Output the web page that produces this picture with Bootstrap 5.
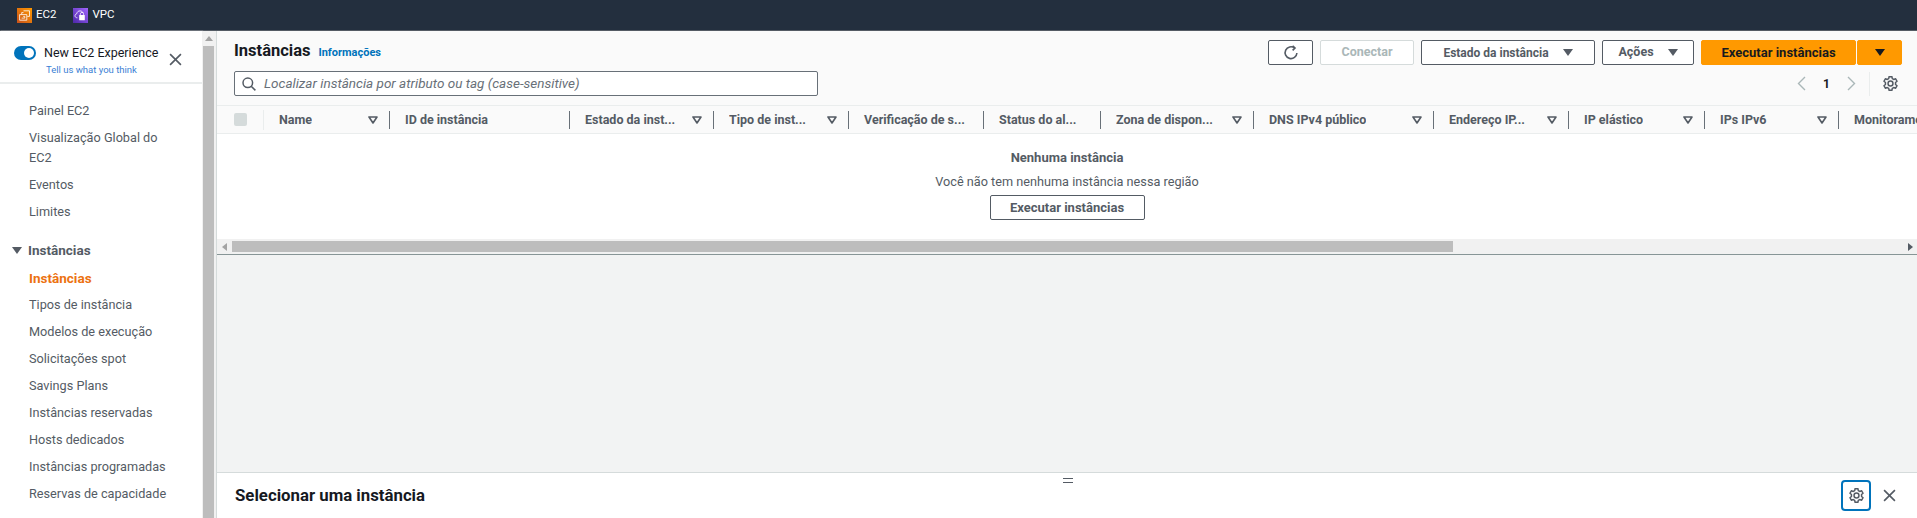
<!DOCTYPE html>
<html lang="pt-BR">
<head>
<meta charset="UTF-8">
<meta name="viewport" content="width=device-width, initial-scale=1.0">
<title>Instâncias | EC2</title>
<link href="https://cdn.jsdelivr.net/npm/bootstrap@5.3.0/dist/css/bootstrap.min.css" rel="stylesheet">
<style>
    html, body {
        height: 100%;
        overflow: hidden;
    }

    body {
        font-family: Roboto, "Liberation Sans", sans-serif;
        font-size: 13px;
        color: #16191f;
        background: #fff;
    }

    .app-top {
        height: 31px;
        padding-left: 17px;
        background: #232f3e;
        border-bottom: 1px solid #545b64;
        color: #fff;
        font-size: 11.5px;
    }

    .svc {
        gap: 4px;
        margin-right: 17px;
    }

    .app-body {
        height: 487px;
    }

    /* left nav */
    .side {
        width: 202px;
        flex: none;
        box-shadow: 1px 0 1px #e5e5e5;
    }

    .side-head {
        height: 53px;
        padding: 14px 20px 0 14px;
        border-bottom: 2px solid #eaeded;
    }

    .toggle-pill {
        width: 22px;
        height: 14px;
        margin-top: 1px;
        border-radius: 7px;
        background: #0073bb;
        position: relative;
        flex: none;
    }

    .toggle-pill::after {
        content: "";
        position: absolute;
        right: 2px;
        top: 2px;
        width: 10px;
        height: 10px;
        border-radius: 50%;
        background: #fff;
    }

    .exp-title {
        font-size: 12.5px;
        line-height: 16px;
        color: #16191f;
        white-space: nowrap;
    }

    .exp-link {
        display: block;
        margin: 2px 0 0 2px;
        font-size: 9.5px;
        line-height: 14px;
        color: #3b7fd5;
        text-decoration: none;
        white-space: nowrap;
    }

    .side-close {
        margin-top: 8px;
    }

    .side-list {
        padding: 17px 24px 0 29px;
        margin: 0;
        list-style: none;
    }

    .side-list li {
        line-height: 20px;
        margin-bottom: 7px;
        color: #545b64;
        font-size: 12.7px;
    }

    .side-list .group-head {
        margin: 18px 0 8px -17px;
        font-size: 13.5px;
        font-weight: 700;
        gap: 6px;
    }

    .side-list .is-active {
        color: #ec7211;
        font-size: 13.5px;
        font-weight: 700;
    }

    .tri {
        width: 0;
        height: 0;
        border-left: 5px solid transparent;
        border-right: 5px solid transparent;
        border-top: 7px solid #545b64;
        display: inline-block;
        flex: none;
    }

    .tri-dark {
        border-top-color: #16191f;
    }

    .vscroll {
        width: 14px;
        flex: none;
        padding: 0 2px 0 1px;
        background: #f1f1f1;
    }

    .vscroll-up {
        height: 15px;
        color: #a3a3a3;
    }

    .vscroll-thumb {
        height: 472px;
        background: #bdbdbd;
    }

    /* main pane */
    .main-pane {
        min-width: 0;
        border-left: 1px solid #d5dbdb;
        background: #f2f3f3;
    }

    .list-head {
        height: 74px;
        padding: 9px 15px 0 17px;
        background: #fafafa;
    }

    .page-title {
        font-size: 16.5px;
        font-weight: 700;
        line-height: 22px;
        margin: 0;
    }

    .info-link {
        font-size: 11px;
        font-weight: 700;
        color: #0073bb;
        text-decoration: none;
    }

    .aws-btn {
        height: 25px;
        padding: 0;
        border: 1px solid #545b64;
        border-radius: 2px;
        background: #fff;
        color: #545b64;
        font-size: 12.5px;
        font-weight: 700;
        line-height: 1;
        white-space: nowrap;
    }

    .aws-btn:disabled {
        border-color: #d5dbdb;
        color: #aab7b8;
        opacity: 1;
    }

    .aws-primary {
        border-color: #ff9900;
        background: #ff9900;
        color: #16191f;
    }

    .btn-row {
        gap: 7px;
    }

    .btn-split {
        gap: 14px;
    }

    .w-refresh { width: 45px; }
    .w-connect { width: 94px; }
    .w-state { width: 174px; font-size: 12px; }
    .w-action { width: 92px; }
    .w-run { width: 155px; font-size: 13px; }
    .w-caret { width: 45px; margin-left: -6px; }
    .w-empty { width: 155px; font-size: 13px; }

    .find-box {
        width: 584px;
        height: 25px;
        margin-top: 9px;
        padding-left: 7px;
        gap: 8px;
        border: 1px solid #687078;
        border-radius: 2px;
        background: #fff;
        color: #687078;
        font-size: 13.5px;
        font-style: italic;
    }

    .pager {
        height: 25px;
        margin-top: 6px;
        padding-right: 4px;
        gap: 17px;
        color: #16191f;
        font-weight: 700;
        font-size: 12px;
    }

    .pager-sep {
        width: 1px;
        height: 24px;
        margin: 0 -4px;
        background: #eaeded;
    }

    /* instance table */
    .inst-wrap {
        height: 134px;
        background: #fff;
        overflow: hidden;
    }

    .inst-head {
        display: grid;
        grid-template-columns: 47px 126px 180px 144px 135px 135px 117px 153px 180px 135px 136px 134px 200px;
        height: 29px;
        align-items: center;
        background: #fafafa;
        border-top: 1px solid #eaeded;
        border-bottom: 1px solid #eaeded;
        color: #545b64;
        font-size: 12.5px;
        font-weight: 700;
        white-space: nowrap;
    }

    .head-check {
        padding-left: 17px;
        height: 20px;
        border-right: 1px solid #eaeded;
    }

    .check-box {
        display: block;
        width: 13px;
        height: 13px;
        margin-top: 3px;
        border-radius: 2px;
        background: #d5dbdb;
    }

    .head-cell {
        height: 18px;
        padding: 0 11px 0 15px;
        border-right: 1px solid #687078;
        line-height: 18px;
        min-width: 0;
    }

    .head-cell span {
        overflow: hidden;
        text-overflow: ellipsis;
    }

    .empty-box {
        padding-top: 14px;
        color: #545b64;
    }

    .empty-title {
        font-size: 13px;
        font-weight: 700;
        line-height: 20px;
    }

    .empty-msg {
        font-size: 12.7px;
        line-height: 20px;
        margin: 4px 0 3px;
    }

    .hscroll {
        height: 15px;
        padding: 2px 0;
        background: #f1f1f1;
    }

    .hscroll-arrow {
        width: 14px;
        flex: none;
        color: #a3a3a3;
    }

    .hscroll-thumb {
        width: 1221px;
        margin-left: 1px;
        background: #bdbdbd;
    }

    .split-line {
        height: 1px;
        background: #879596;
    }

    .gray-area {
        flex: 1;
    }

    .detail-pane {
        height: 46px;
        padding: 0 21px 0 18px;
        border-top: 1px solid #d5dbdb;
        background: #fff;
        position: relative;
    }

    .detail-title {
        font-size: 16.8px;
        font-weight: 700;
        margin: 0;
    }

    .drag-mark {
        position: absolute;
        left: 846px;
        top: 5px;
        width: 10px;
        height: 5px;
        border-top: 1px solid #545b64;
        border-bottom: 1px solid #545b64;
    }

    .gear-focus {
        width: 30px;
        height: 31px;
        margin-right: 12px;
        border: 2px solid #0073bb;
        border-radius: 4px;
    }
</style>
</head>
<body>
    <svg width="0" height="0" class="d-block">
        <defs>
            <symbol id="ico-gear" viewBox="1 1 14 14">
                <path fill="none" stroke="currentColor" stroke-width="1.4" stroke-linejoin="round" d="M6.7 1.6h2.6l.4 1.8 1.3.8 1.8-.6 1.3 2.3-1.4 1.2v1.8l1.4 1.2-1.3 2.3-1.8-.6-1.3.8-.4 1.8H6.7l-.4-1.8-1.3-.8-1.8.6-1.3-2.3 1.4-1.2V7.1L1.9 5.9l1.3-2.3 1.8.6 1.3-.8z"/>
                <circle cx="8" cy="8" r="2.3" fill="none" stroke="currentColor" stroke-width="1.4"/>
            </symbol>
            <symbol id="ico-x" viewBox="0 0 12 12">
                <path d="M1 1l10 10M11 1L1 11" fill="none" stroke="currentColor" stroke-width="1.5"/>
            </symbol>
            <symbol id="ico-filter" viewBox="0 0 10 8">
                <path d="M1 1h8L5 7z" fill="none" stroke="currentColor" stroke-width="1.6" stroke-linejoin="round"/>
            </symbol>
            <linearGradient id="grad-ec2" x1="0" y1="1" x2="1" y2="0">
                <stop offset="0" stop-color="#c8511b"/>
                <stop offset="1" stop-color="#ff9900"/>
            </linearGradient>
            <linearGradient id="grad-vpc" x1="0" y1="1" x2="1" y2="0">
                <stop offset="0" stop-color="#4d27a8"/>
                <stop offset="1" stop-color="#a166ff"/>
            </linearGradient>
        </defs>
    </svg>

    <nav class="app-top d-flex align-items-center">
        <div class="svc d-flex align-items-center">
            <svg width="15" height="15" viewBox="0 0 15 15">
                <rect width="15" height="15" fill="url(#grad-ec2)"/>
                <path d="M6.5 2.8h6v5.6h-2.2M2.6 6.6h7.2v5.6H2.6zM4.7 6.4V4.6h1.8M6.2 8.4h1.6v1.7H4.6" fill="none" stroke="#fff" stroke-width=".8"/>
            </svg>
            <span>EC2</span>
        </div>
        <div class="svc d-flex align-items-center">
            <svg width="15" height="15" viewBox="0 0 15 15">
                <rect width="15" height="15" fill="url(#grad-vpc)"/>
                <path d="M4.4 9.8C2.8 9.8 2 8.8 2 7.7c0-1 .7-1.8 1.7-1.9.3-1.8 1.6-2.9 3.3-2.9 1.4 0 2.6.8 3.1 2" fill="none" stroke="#fff" stroke-width=".8"/>
                <rect x="6.2" y="6.9" width="5.6" height="5.4" rx=".5" fill="#fff"/>
                <path d="M7.4 6.9V5.8c0-1.9 3.2-1.9 3.2 0v1.1" fill="none" stroke="#fff" stroke-width=".8"/>
            </svg>
            <span>VPC</span>
        </div>
    </nav>

    <div class="app-body d-flex">
        <aside class="side overflow-hidden">
            <div class="side-head d-flex">
                <span class="toggle-pill"></span>
                <div class="ms-2">
                    <div class="exp-title">New EC2 Experience</div>
                    <a href="#" class="exp-link">Tell us what you think</a>
                </div>
                <svg class="side-close ms-auto flex-none" width="13" height="13" color="#545b64"><use href="#ico-x"/></svg>
            </div>
            <ul class="side-list">
                <li>Painel EC2</li>
                <li>Visualização Global do EC2</li>
                <li>Eventos</li>
                <li>Limites</li>
                <li class="group-head d-flex align-items-center"><i class="tri"></i>Instâncias</li>
                <li class="is-active">Instâncias</li>
                <li>Tipos de instância</li>
                <li>Modelos de execução</li>
                <li>Solicitações spot</li>
                <li>Savings Plans</li>
                <li>Instâncias reservadas</li>
                <li>Hosts dedicados</li>
                <li>Instâncias programadas</li>
                <li>Reservas de capacidade</li>
            </ul>
        </aside>
        <div class="vscroll">
            <div class="vscroll-up d-flex justify-content-center align-items-center">
                <svg width="8" height="5" viewBox="0 0 8 5"><path d="M4 0l4 5H0z" fill="currentColor"/></svg>
            </div>
            <div class="vscroll-thumb"></div>
        </div>

        <main class="main-pane flex-fill d-flex flex-column overflow-hidden">
            <div class="list-head d-flex justify-content-between">
                <div>
                    <div class="d-flex align-items-baseline gap-2">
                        <h1 class="page-title">Instâncias</h1>
                        <a href="#" class="info-link">Informações</a>
                    </div>
                    <div class="find-box d-flex align-items-center">
                        <svg width="14" height="14" viewBox="0 0 14 14"><circle cx="5.8" cy="5.8" r="4.8" fill="none" stroke="#545b64" stroke-width="1.5"/><path d="M9.2 9.2l4.2 4.2" stroke="#545b64" stroke-width="1.5"/></svg>
                        <span>Localizar instância por atributo ou tag (case-sensitive)</span>
                    </div>
                </div>
                <div>
                    <div class="btn-row d-flex">
                        <button type="button" class="aws-btn w-refresh d-flex align-items-center justify-content-center">
                            <svg width="16" height="16" viewBox="0 0 16 16"><path d="M11.6 3A5.9 5.9 0 1 0 13.9 8" fill="none" stroke="#545b64" stroke-width="1.6"/><path d="M9.6 .8l2.4 2.2-2.4 2.4" fill="none" stroke="#545b64" stroke-width="1.6"/></svg>
                        </button>
                        <button type="button" class="aws-btn w-connect" disabled>Conectar</button>
                        <button type="button" class="aws-btn w-state btn-split d-flex align-items-center justify-content-center">Estado da instância <i class="tri"></i></button>
                        <button type="button" class="aws-btn w-action btn-split d-flex align-items-center justify-content-center">Ações <i class="tri"></i></button>
                        <button type="button" class="aws-btn aws-primary w-run">Executar instâncias</button>
                        <button type="button" class="aws-btn aws-primary w-caret d-flex align-items-center justify-content-center"><i class="tri tri-dark"></i></button>
                    </div>
                    <div class="pager d-flex justify-content-end align-items-center">
                        <svg width="9" height="15" viewBox="0 0 9 15"><path d="M8 1L1.5 7.5 8 14" fill="none" stroke="#aab7b8" stroke-width="1.4"/></svg>
                        <span>1</span>
                        <svg width="9" height="15" viewBox="0 0 9 15"><path d="M1 1l6.5 6.5L1 14" fill="none" stroke="#aab7b8" stroke-width="1.4"/></svg>
                        <span class="pager-sep"></span>
                        <svg width="15" height="15" color="#545b64"><use href="#ico-gear"/></svg>
                    </div>
                </div>
            </div>

            <div class="inst-wrap">
                <div class="inst-head">
                    <div class="head-check"><i class="check-box"></i></div>
                    <div class="head-cell d-flex justify-content-between align-items-center"><span>Name</span><svg width="10" height="8" class="flex-none" color="#545b64"><use href="#ico-filter"/></svg></div>
                    <div class="head-cell"><span>ID de instância</span></div>
                    <div class="head-cell d-flex justify-content-between align-items-center"><span>Estado da inst...</span><svg width="10" height="8" class="flex-none" color="#545b64"><use href="#ico-filter"/></svg></div>
                    <div class="head-cell d-flex justify-content-between align-items-center"><span>Tipo de inst...</span><svg width="10" height="8" class="flex-none" color="#545b64"><use href="#ico-filter"/></svg></div>
                    <div class="head-cell"><span>Verificação de s...</span></div>
                    <div class="head-cell"><span>Status do al...</span></div>
                    <div class="head-cell d-flex justify-content-between align-items-center"><span>Zona de dispon...</span><svg width="10" height="8" class="flex-none" color="#545b64"><use href="#ico-filter"/></svg></div>
                    <div class="head-cell d-flex justify-content-between align-items-center"><span>DNS IPv4 público</span><svg width="10" height="8" class="flex-none" color="#545b64"><use href="#ico-filter"/></svg></div>
                    <div class="head-cell d-flex justify-content-between align-items-center"><span>Endereço IP...</span><svg width="10" height="8" class="flex-none" color="#545b64"><use href="#ico-filter"/></svg></div>
                    <div class="head-cell d-flex justify-content-between align-items-center"><span>IP elástico</span><svg width="10" height="8" class="flex-none" color="#545b64"><use href="#ico-filter"/></svg></div>
                    <div class="head-cell d-flex justify-content-between align-items-center"><span>IPs IPv6</span><svg width="10" height="8" class="flex-none" color="#545b64"><use href="#ico-filter"/></svg></div>
                    <div class="head-cell border-0">Monitoramento</div>
                </div>
                <div class="empty-box text-center">
                    <div class="empty-title">Nenhuma instância</div>
                    <p class="empty-msg">Você não tem nenhuma instância nessa região</p>
                    <button type="button" class="aws-btn w-empty">Executar instâncias</button>
                </div>
            </div>
            <div class="hscroll d-flex">
                <div class="hscroll-arrow d-flex justify-content-center align-items-center"><svg width="5" height="8" viewBox="0 0 5 8"><path d="M5 0v8L0 4z" fill="currentColor"/></svg></div>
                <div class="hscroll-thumb"></div>
                <div class="hscroll-arrow ms-auto d-flex justify-content-center align-items-center"><svg width="5" height="8" viewBox="0 0 5 8"><path d="M0 0v8l5-4z" fill="#545b64"/></svg></div>
            </div>
            <div class="split-line"></div>
            <div class="gray-area"></div>
            <section class="detail-pane d-flex justify-content-between align-items-center">
                <i class="drag-mark"></i>
                <h2 class="detail-title">Selecionar uma instância</h2>
                <div class="d-flex align-items-center">
                    <div class="gear-focus d-flex justify-content-center align-items-center">
                        <svg width="15" height="15" color="#545b64"><use href="#ico-gear"/></svg>
                    </div>
                    <svg width="13" height="13" color="#545b64"><use href="#ico-x"/></svg>
                </div>
            </section>
        </main>
    </div>

    <script src="https://cdn.jsdelivr.net/npm/bootstrap@5.3.0/dist/js/bootstrap.bundle.min.js"></script>
</body>
</html>
